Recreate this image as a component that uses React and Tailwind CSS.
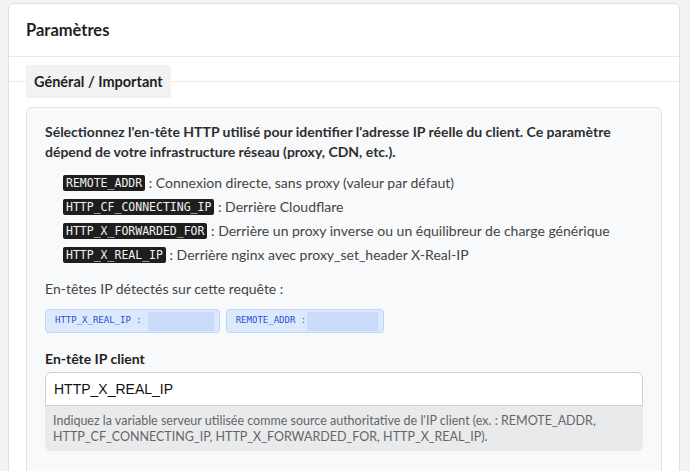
import React from "react";

const headers = [
  { code: "REMOTE_ADDR", text: "Connexion directe, sans proxy (valeur par défaut)" },
  { code: "HTTP_CF_CONNECTING_IP", text: "Derrière Cloudflare" },
  { code: "HTTP_X_FORWARDED_FOR", text: "Derrière un proxy inverse ou un équilibreur de charge générique" },
  { code: "HTTP_X_REAL_IP", text: "Derrière nginx avec proxy_set_header X-Real-IP" },
];

const detected = [
  { name: "HTTP_X_REAL_IP :", w: "w-[66px]", gap: "ml-[6px]" },
  { name: "REMOTE_ADDR :", w: "w-[71px]", gap: "ml-[1px]" },
];

export default function App() {
  return (
    <div className="min-h-screen bg-[#f3f3f3] pt-[3px] pl-[8px] pr-[10px] font-['Lato','Noto_Sans',sans-serif] text-[#333]">
      <div className="rounded-t-[6px] border border-[#e0e0e0] bg-white pb-10">
        {/* card header */}
        <div className="flex h-[53px] items-center border-b border-[#e9e9e9] px-[17px]">
          <h1 className="text-[16.5px] font-bold text-[#1f1f1f]">Paramètres</h1>
        </div>

        <fieldset className="mt-[8px] border-t border-[#ececec] px-[17px] pt-[9px]">
          <legend className="bg-[#f2f2f2] px-[8px] text-[14.5px] font-bold leading-[33px] text-[#1f1f1f]">
            Général / Important
          </legend>

          <div className="rounded-[6px] border border-[#dee2e6] bg-[#f8f9fa] px-[18px] pt-[14px] pb-16">
            <p className="text-[14px] font-bold leading-[20px] text-[#2e2e2e]">
              Sélectionnez l'en-tête HTTP utilisé pour identifier l'adresse IP réelle du client. Ce paramètre dépend de votre infrastructure réseau (proxy, CDN, etc.).
            </p>

            <ul className="mt-[9px] pl-[18px]">
              {headers.map((h) => (
                <li key={h.code} className="flex items-center text-[14px] leading-[24px] text-[#444]">
                  <code className="rounded-[2px] bg-[#1e1e1e] px-[3px] font-['DejaVu_Sans_Mono',monospace] text-[11.5px] leading-[16px] text-[#f2f2f2]">
                    {h.code}
                  </code>
                  <span className="whitespace-pre"> : {h.text}</span>
                </li>
              ))}
            </ul>

            <p className="mt-[12px] text-[14px] leading-[20px] text-[#444]">
              En-têtes IP détectés sur cette requête :
            </p>

            <div className="mt-[10px] flex gap-[6px]">
              {detected.map((d) => (
                <span
                  key={d.name}
                  className="inline-flex h-[24px] items-center rounded-[4px] border border-[#bcd5fa] bg-[#dce9fd] pl-[9px] pr-[5px] font-['DejaVu_Sans_Mono',monospace] text-[9px] text-[#2450d2]"
                >
                  <span className="whitespace-pre">{d.name}</span>
                  <span className={`h-[19px] ${d.w} ${d.gap} bg-[#c9dbf9]`} />
                </span>
              ))}
            </div>

            <label className="mt-[16px] block text-[14px] font-bold leading-[20px] text-[#1f1f1f]">
              En-tête IP client
            </label>
            <div className="mt-[3px]">
              <input
                readOnly
                value="HTTP_X_REAL_IP"
                className="block h-[34px] w-full rounded-t-[6px] border border-[#cfcfcf] bg-white px-[8px] font-['Liberation_Sans',Arial,sans-serif] text-[14px] text-[#111] outline-none"
              />
              <div className="rounded-b-[6px] bg-[#e9eaec] px-[8px] pt-[7px] pb-[6px] text-[12.5px] leading-[16px] text-[#666]">
                Indiquez la variable serveur utilisée comme source authoritative de l'IP client (ex. : REMOTE_ADDR, HTTP_CF_CONNECTING_IP, HTTP_X_FORWARDED_FOR, HTTP_X_REAL_IP).
              </div>
            </div>
          </div>
        </fieldset>
      </div>
    </div>
  );
}
